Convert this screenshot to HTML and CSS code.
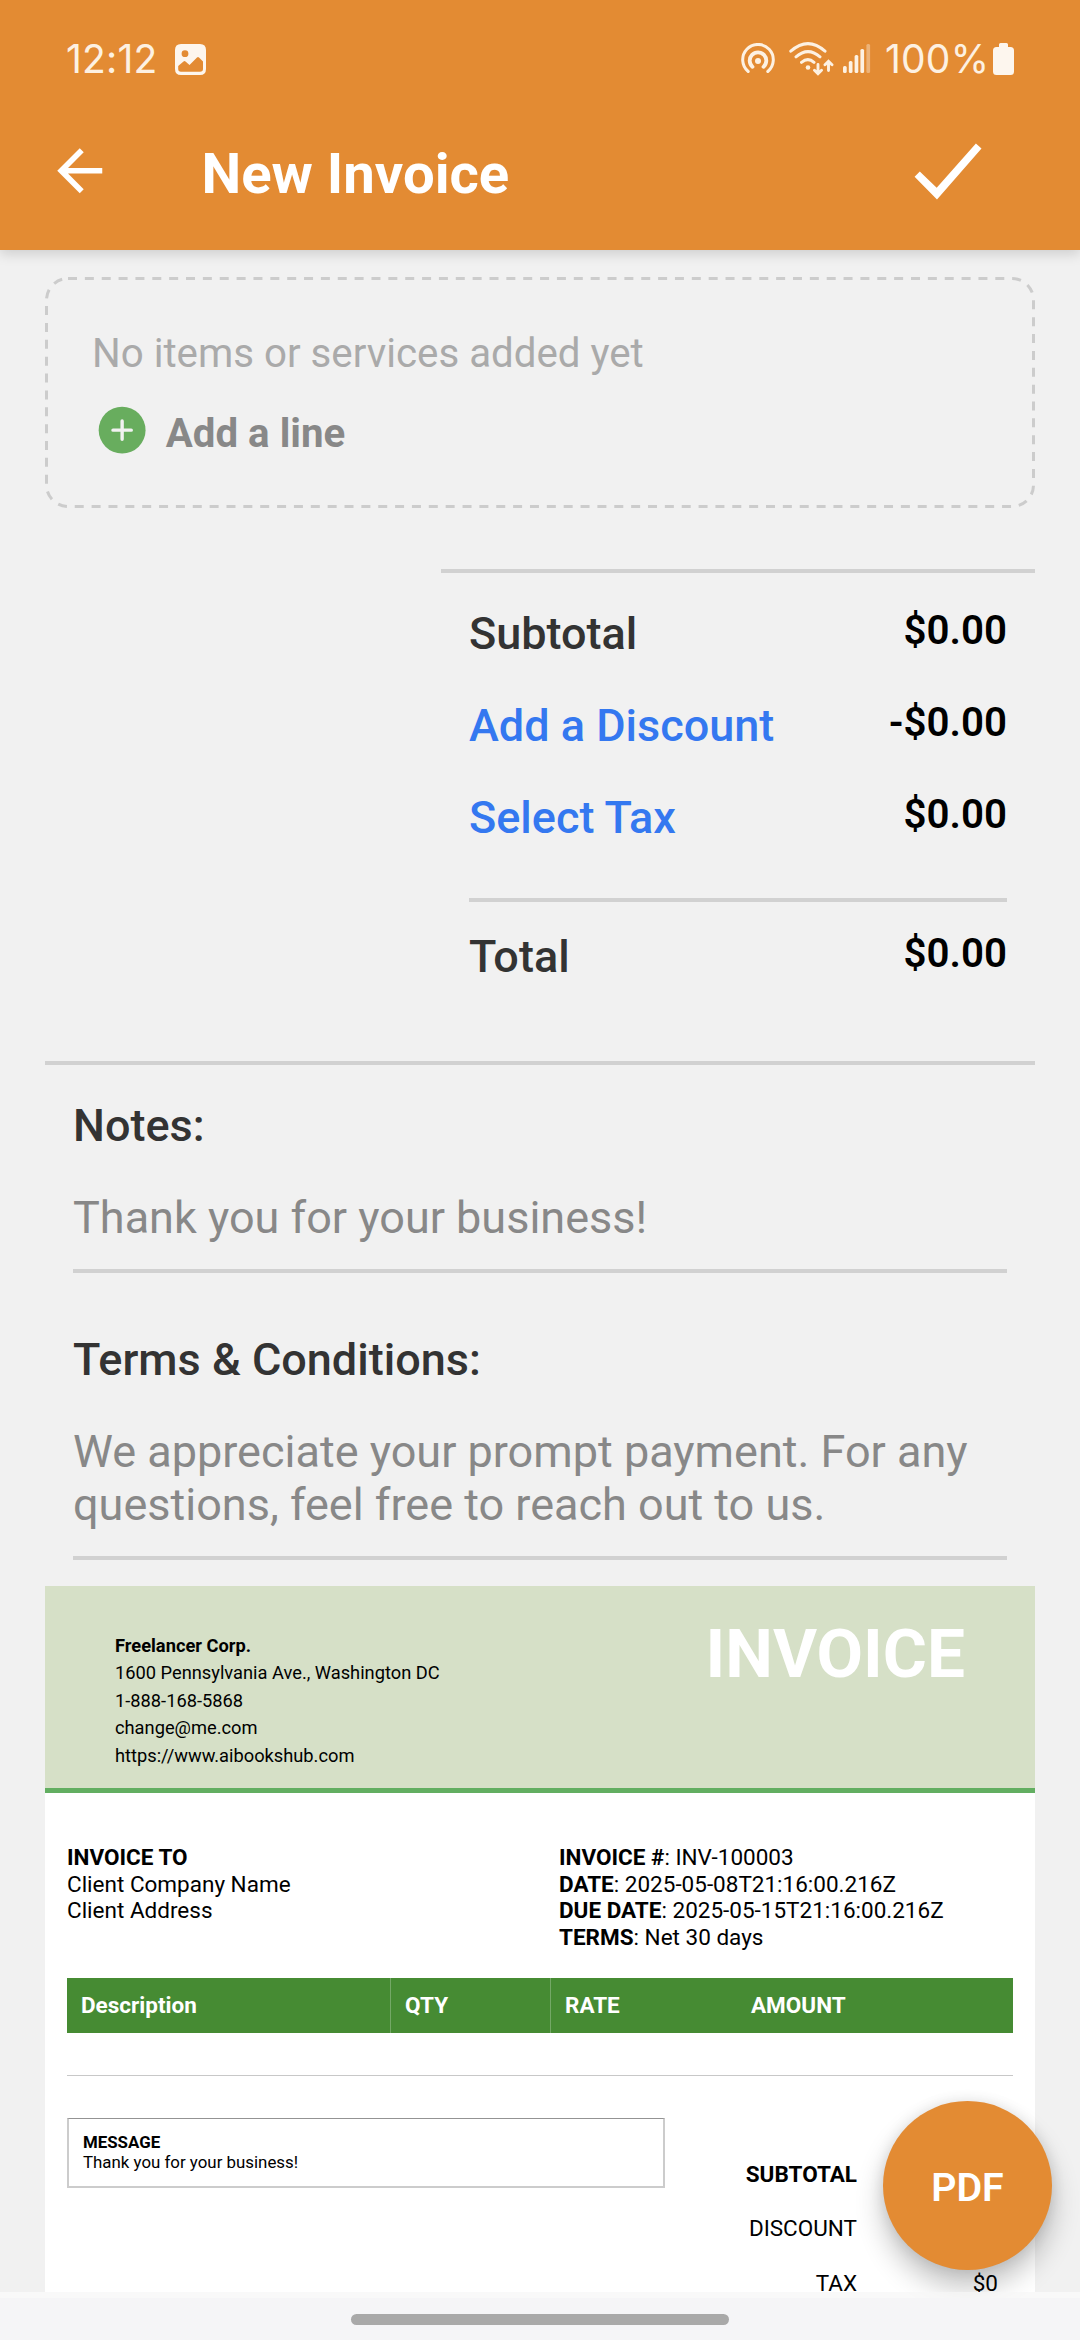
FILE: index.html
```html
<!DOCTYPE html>
<html lang="en">
<head>
<meta charset="utf-8">
<title>New Invoice</title>
<link rel="stylesheet" href="styles.css">
</head>
<body>
<header class="app-bar">
  <div class="status">
    <span class="clock">12:12</span>
    <svg class="ic-picture" width="31" height="31" viewBox="0 0 31 31"><path fill="#fdf6ee" fill-rule="evenodd" d="M6 0H25Q31 0 31 6V25Q31 31 25 31H6Q0 31 0 25V6Q0 0 6 0ZM10 6.300A3.400 3.400 0 1 0 10 13.100A3.400 3.400 0 1 0 10 6.300ZM3.200 22V25Q3.200 27.800 6 27.800H25Q28 27.800 28 25V17.500L24 13.500Q23 12.700 22 13.500L14.500 21L10.500 17.500Q9.500 16.700 8.500 17.500Z"/></svg>
    <div class="status-right">
      <svg class="ic-hotspot" width="34" height="32" viewBox="0 0 34 32" fill="none" stroke="#fdf1e2" stroke-linecap="round"><path stroke-width="3" d="M7.200 28.500A15.300 15.300 0 1 1 26.800 28.500"/><path stroke-width="3.800" d="M11.500 23.800A8.300 8.300 0 1 1 22.500 23.800"/><circle cx="17" cy="18" r="3" fill="#fdf1e2" stroke="none"/></svg>
      <svg class="ic-wifi" width="45" height="34" viewBox="0 0 45 34" fill="none" stroke="#fdf1e2" stroke-width="3" stroke-linecap="round"><path d="M1.800 9.200Q19 -6 36 9.200M7 14.800Q19 4.500 31 14.800M12.500 20.300Q19 15 25 20.300"/><circle cx="19" cy="25.500" r="2.300" fill="#fdf1e2" stroke="none"/><path stroke-width="2.900" d="M29 22.500V31.500M25.500 28.300L29 31.700L32.500 28.300M39.500 28.500V19.500M36 22.700L39.500 19.300L43 22.700"/></svg>
      <svg class="ic-signal" width="28" height="30" viewBox="0 0 28 30" fill="#fdf1e2"><rect x="0" y="22" width="3.700" height="7" rx="1.500"/><rect x="5.800" y="17" width="3.700" height="12" rx="1.500"/><rect x="11.600" y="11" width="3.700" height="18" rx="1.500"/><rect x="17.400" y="5" width="3.700" height="24" rx="1.500"/><rect x="23.400" y="0" width="3.700" height="29" rx="1.500" opacity=".4"/></svg>
      <span class="battery-level">100%</span>
      <svg class="ic-battery" width="21" height="32" viewBox="0 0 21 32"><path fill="#fdf6ee" d="M6 4V1.500Q6 0 7.500 0H13.500Q15 0 15 1.500V4H17.500Q21 4 21 7.500V28.500Q21 32 17.500 32H3.500Q0 32 0 28.500V7.500Q0 4 3.500 4Z"/></svg>
    </div>
  </div>
  <div class="toolbar">
    <svg class="ic-back" width="67.500" height="67.500" viewBox="0 0 24 24" fill="#fff"><path d="M20 11H7.830l5.590-5.590L12 4l-8 8 8 8 1.410-1.410L7.830 13H20v-2z"/></svg>
    <h1 class="title">New Invoice</h1>
    <svg class="ic-check" width="68" height="58" viewBox="0 0 68 58" fill="#fff"><path d="M.600 33.800L5.800 28.500L22.700 44.800L61.900 .500L67.500 5.500L23 56.500Z"/></svg>
  </div>
</header>

<main class="content">
  <section class="items">
    <svg class="items-outline" width="990" height="231" viewBox="0 0 990 231" fill="none"><rect x="1.500" y="1.500" width="987" height="228" rx="21.500" stroke="#ccc" stroke-width="3" stroke-dasharray="9 7.860"/></svg>
    <p class="items-empty">No items or services added yet</p>
    <div class="add-line">
      <svg width="56.250" height="56.250" viewBox="0 0 24 24"><circle cx="12" cy="12" r="10" fill="#68ad5e"/><path d="M12 8.100v7.800M8.100 12h7.800" stroke="#f2f2f2" stroke-width="1.450" stroke-linecap="round"/></svg>
      <span>Add a line</span>
    </div>
  </section>

  <section class="totals">
    <div class="total-row"><span class="label">Subtotal</span><span class="amount">$0.00</span></div>
    <div class="total-row"><a class="label link">Add a Discount</a><span class="amount">-$0.00</span></div>
    <div class="total-row"><a class="label link">Select Tax</a><span class="amount">$0.00</span></div>
    <div class="total-row grand"><span class="label">Total</span><span class="amount">$0.00</span></div>
  </section>

  <section class="texts">
    <div class="field notes">
      <h2>Notes:</h2>
      <p>Thank you for your business!</p>
    </div>
    <div class="field terms">
      <h2>Terms &amp; Conditions:</h2>
      <p>We appreciate your prompt payment. For any questions, feel free to reach out to us.</p>
    </div>
  </section>

  <article class="invoice">
    <div class="inv-head">
      <div class="company"><b>Freelancer Corp.</b><span>1600 Pennsylvania Ave., Washington DC</span><span>1-888-168-5868</span><span>change@me.com</span><span>https://www.aibookshub.com</span></div>
      <div class="inv-title">INVOICE</div>
    </div>
    <div class="parties">
      <div class="to"><b>INVOICE TO</b><br>Client Company Name<br>Client Address</div>
      <div class="meta"><b>INVOICE #</b>: INV-100003<br><b>DATE</b>: 2025-05-08T21:16:00.216Z<br><b>DUE DATE</b>: 2025-05-15T21:16:00.216Z<br><b>TERMS</b>: Net 30 days</div>
    </div>
    <div class="table-head"><span>Description</span><span>QTY</span><span>RATE</span><span>AMOUNT</span></div>
    <div class="table-rule"></div>
    <div class="inv-foot">
      <div class="message"><b>MESSAGE</b><br>Thank you for your business!</div>
      <div class="sums">
        <b>SUBTOTAL</b><span></span>
        <span>DISCOUNT</span><span></span>
        <span>TAX</span><span>$0</span>
      </div>
    </div>
  </article>
</main>

<button class="fab">PDF</button>
<footer class="nav"><div class="pill"></div></footer>
</body>
</html>
```
FILE: styles.css
```css
* { box-sizing: border-box; margin: 0; padding: 0; }
body {
  width: 1080px; height: 2340px; overflow: hidden; position: relative;
  display: flex; flex-direction: column;
  background: #f1f1f1; font-family: Roboto, sans-serif; color: #000;
}
svg { display: block; flex: none; }

.app-bar {
  height: 250px; flex: none; background: #e38b33; position: relative;
  box-shadow: 0 4px 12px rgba(0, 0, 0, .15);
}
.status {
  height: 110px; padding: 42px 66px 0 66px; display: flex; align-items: flex-start;
  color: #fdf1e2; font-family: Inter, sans-serif; font-size: 39px; line-height: 34px; font-weight: 400;
}
.clock { width: 109px; letter-spacing: .2px; white-space: nowrap; }
.ic-picture { margin-top: 2px; }
.status-right { margin-left: auto; display: flex; align-items: flex-start; }
.ic-hotspot { margin: 1px 14px 0 0; }
.ic-wifi { margin-right: 9px; }
.ic-signal { margin: 2px 14px 0 0; }
.battery-level { width: 108px; letter-spacing: .2px; white-space: nowrap; }
.ic-battery { margin-top: 1px; }
.toolbar { height: 140px; padding: 27px 98px 0 46px; display: flex; align-items: flex-start; }
.title { margin: 4px 0 0 88px; font-size: 56.25px; line-height: 66px; font-weight: 700; color: #fff; }
.ic-check { margin: 6px 0 0 auto; }

.content { flex: none; height: 2042px; padding: 27px 45px 0; overflow: hidden; }
.items { height: 231px; position: relative; padding: 54px 47px 0; }
.items-outline { position: absolute; left: 0; top: 0; }
.items-empty { font-size: 40.250px; line-height: 46px; color: #aaa; }
.add-line { display: flex; align-items: flex-start; margin: 25px 0 0 1.500px; gap: 16px; }
.add-line span { margin-top: 9px; font-size: 40.250px; line-height: 46px; font-weight: 700; color: #888; }

.totals { margin: 61px 0 0 396px; height: 492px; padding: 34px 28px 0; border-top: 4px solid #d1d1d1; }
.total-row { height: 92px; display: flex; justify-content: space-between; }
.label { font-size: 45px; line-height: 53px; font-weight: 540; color: #333; }
.link { color: #3478f0; }
.amount { margin-top: 1px; font-size: 40.250px; line-height: 46px; font-weight: 600; }
.grand { margin-top: 15px; border-top: 4px solid #d1d1d1; padding-top: 28px; }

.texts { border-top: 4px solid #d1d1d1; padding: 0 28px; }
.field { border-bottom: 4px solid #d1d1d1; font-size: 45px; line-height: 52.700px; }
.field h2 { font-size: 45px; line-height: 53px; font-weight: 540; color: #333; }
.field p { margin-top: 40px; color: #888; }
.notes { height: 208px; padding-top: 34px; }
.terms { height: 287px; padding-top: 60px; }

.invoice { margin-top: 26px; background: #fff; font-size: 22.500px; line-height: 26.700px; height: 800px; }
.inv-head {
  height: 207px; background: #d6e0c7; border-bottom: 5px solid #62ae61;
  display: flex; justify-content: space-between; padding: 46px 70px 0;
}
.company { display: flex; flex-direction: column; font-size: 18.280px; line-height: 27.400px; }
.inv-title { margin-top: -18px; font-size: 67.500px; line-height: 79px; font-weight: 700; color: #fff; }
.parties { display: grid; grid-template-columns: 492px 1fr; padding: 51px 22px 0; height: 185px; }
.table-head {
  margin: 0 22px; height: 55px; display: grid; grid-template-columns: 324px 160px 186px 1fr;
  background: #468b33; color: #fff; font-weight: 700; line-height: 55px;
}
.table-head span { padding-left: 14px; }
.table-head span:nth-child(-n+2) { border-right: 1px solid #74a866; }
.table-rule { margin: 42px 22px 0; height: 1px; background: #c8c8c8; }
.inv-foot { display: flex; justify-content: space-between; margin: 42px 22px 0; }
.message {
  width: 598px; height: 70px; padding: 13px 14px; font-size: 16.875px; line-height: 20px;
  border: 2px solid #ccc; border-top: 1px solid #939393;
}
.sums { width: 252px; margin-top: 43px; display: grid; grid-template-columns: 96px 141px; grid-auto-rows: 54.400px; text-align: right; }
.sums > * { white-space: nowrap; justify-self: end; }

.fab {
  position: absolute; left: 883px; top: 2101px; width: 169px; height: 169px; border: 0; border-radius: 50%;
  background: #e38b33; color: #fff; font: 600 39.375px/46px Roboto, sans-serif; padding-top: 4px;
  box-shadow: 0 17px 28px rgba(0, 0, 0, .24), 0 0 14px rgba(0, 0, 0, .1);
}
.nav {
  flex: none; height: 48px; position: relative; display: flex; justify-content: center;
  background: #f5f5f7; border-top: 6px solid rgba(252, 252, 252, .7); background-clip: padding-box; padding-top: 16px;
}
.pill { width: 378px; height: 11px; border-radius: 6px; background: #a9a9a9; }
```
